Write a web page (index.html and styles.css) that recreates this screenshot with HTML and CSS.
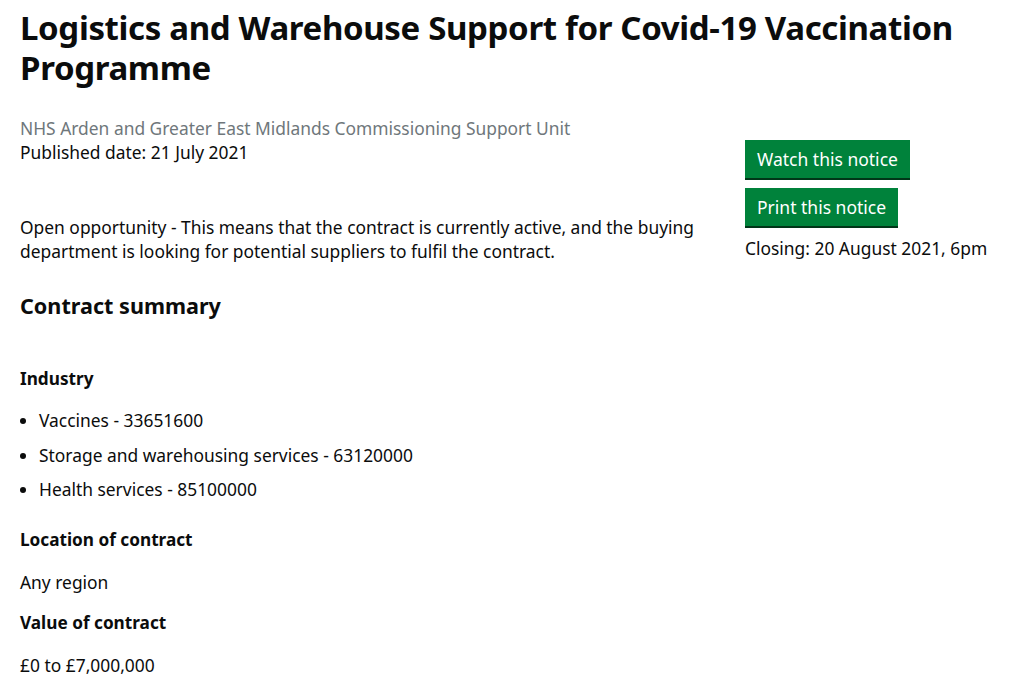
FILE: index.html
```html
<!DOCTYPE html>
<html lang="en">
<head>
    <meta charset="UTF-8">
    <meta name="viewport" content="width=device-width, initial-scale=1.0">
    <title>Logistics and Warehouse Support for Covid-19 Vaccination Programme</title>
    <link rel="stylesheet" href="styles.css">
</head>
<body>
    <main class="page">
        <h1 class="page-title">Logistics and Warehouse Support for Covid-19 Vaccination Programme</h1>

        <div class="notice">
            <div class="notice-main">
                <p class="buyer">NHS Arden and Greater East Midlands Commissioning Support Unit</p>
                <p class="published">Published date: 21 July 2021</p>

                <p class="status">Open opportunity - This means that the contract is currently active, and the buying department is looking for potential suppliers to fulfil the contract.</p>

                <h2 class="section-title">Contract summary</h2>

                <h3 class="field-label first">Industry</h3>
                <ul class="field-list">
                    <li>Vaccines - 33651600</li>
                    <li>Storage and warehousing services - 63120000</li>
                    <li>Health services - 85100000</li>
                </ul>

                <h3 class="field-label">Location of contract</h3>
                <p class="field-value">Any region</p>

                <h3 class="field-label after-value">Value of contract</h3>
                <p class="field-value">£0 to £7,000,000</p>
            </div>

            <aside class="notice-side">
                <a href="#" class="button">Watch this notice</a>
                <a href="#" class="button">Print this notice</a>
                <p class="closing">Closing: 20 August 2021, 6pm</p>
            </aside>
        </div>
    </main>
</body>
</html>
```

FILE: styles.css
```css
body {
    margin: 0;
    font-family: 'Noto Sans', 'Liberation Sans', sans-serif;
    color: #0b0c0c;
    background: #fff;
}
.page {
    padding: 0 20px;
}
.page-title {
    font-size: 33px;
    font-weight: 700;
    line-height: 40px;
    margin: 8px 0 28px;
    letter-spacing: -0.35px;
}
.notice {
    display: flex;
    align-items: flex-start;
}
.notice-main {
    width: 690px;
}
.notice-side {
    margin-left: 35px;
    padding-top: 24px;
}
p, h2, h3, ul {
    margin: 0;
}
.buyer, .published, .status, .field-value, .field-list li, .closing {
    font-size: 17.4px;
    line-height: 24px;
}
.buyer {
    color: #6f777b;
}
.status {
    margin-top: 51px;
}
.section-title {
    font-size: 21.6px;
    line-height: 30px;
    font-weight: 700;
    margin-top: 28px;
}
.field-label {
    font-size: 17.2px;
    line-height: 24px;
    font-weight: 700;
    margin-top: 27px;
}
.field-label.first {
    margin-top: 46px;
}
.field-label.after-value {
    margin-top: 17px;
}
.field-list {
    padding-left: 19px;
    margin-top: 17px;
}
.field-list li {
    margin-bottom: 10.5px;
}
.field-list li:last-child {
    margin-bottom: 0;
}
.field-value {
    margin-top: 18px;
}
.button {
    display: table;
    background-color: #00823b;
    color: #fff;
    text-decoration: none;
    font-size: 17.5px;
    line-height: 24px;
    padding: 7px 12px;
    box-shadow: 0 2px 0 #003618;
    margin-bottom: 10px;
}
.closing {
    margin-top: 0;
}
```
